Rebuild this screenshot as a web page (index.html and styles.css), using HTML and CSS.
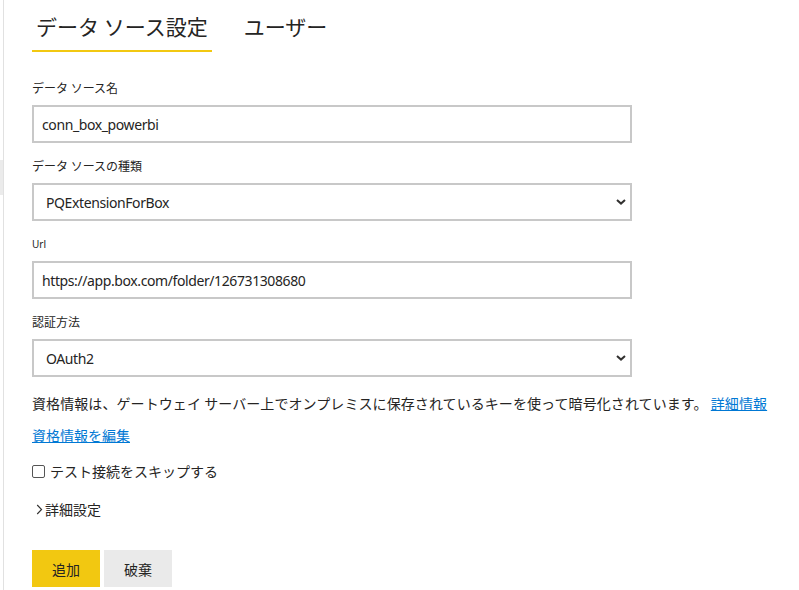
FILE: index.html
```html
<!DOCTYPE html>
<html lang="ja">
<head>
<meta charset="utf-8">
<title>データ ソース設定</title>
<link rel="stylesheet" href="styles.css">
</head>
<body>
<div class="page">
  <div class="rail"><div class="rail-mark"></div></div>
  <div class="main">
    <div class="tabs">
      <div class="tab active">データ ソース設定</div>
      <div class="tab">ユーザー</div>
    </div>

    <div class="field">
      <div class="label">データ ソース名</div>
      <div class="box"><span class="value">conn_box_powerbi</span></div>
    </div>

    <div class="field">
      <div class="label">データ ソースの種類</div>
      <div class="box select"><span class="value">PQExtensionForBox</span>
        <svg class="chev" width="10" height="6" viewBox="0 0 10 6"><path d="M1 1 L5 4.6 L9 1" fill="none" stroke="#323130" stroke-width="2"/></svg>
      </div>
    </div>

    <div class="field">
      <div class="label small">Url</div>
      <div class="box"><span class="value">https://app.box.com/folder/126731308680</span></div>
    </div>

    <div class="field">
      <div class="label">認証方法</div>
      <div class="box select"><span class="value">OAuth2</span>
        <svg class="chev" width="10" height="6" viewBox="0 0 10 6"><path d="M1 1 L5 4.6 L9 1" fill="none" stroke="#323130" stroke-width="2"/></svg>
      </div>
    </div>

    <p class="note">資格情報は、ゲートウェイ サーバー上でオンプレミスに保存されているキーを使って暗号化されています。 <a class="link" href="#">詳細情報</a></p>
    <p class="edit"><a class="link" href="#">資格情報を編集</a></p>

    <label class="check"><span class="checkbox"></span><span>テスト接続をスキップする</span></label>

    <div class="advanced">
      <svg width="7" height="11" viewBox="0 0 7 11"><path d="M1.2 1 L5.6 5.5 L1.2 10" fill="none" stroke="#323130" stroke-width="1.1"/></svg>
      <span>詳細設定</span>
    </div>

    <div class="actions">
      <button class="btn primary">追加</button>
      <button class="btn secondary">破棄</button>
    </div>
  </div>
</div>
</body>
</html>
```

FILE: styles.css
```css
html, body {
  margin: 0;
  padding: 0;
  background: #ffffff;
}
body {
  font-family: "Noto Sans", "Noto Sans CJK JP", sans-serif;
  color: #252423;
  font-size: 14px;
}
.page {
  display: flex;
  min-height: 590px;
}
.rail {
  width: 3px;
  flex: none;
}
.rail-mark {
  margin-top: 160px;
  height: 35px;
  background: #ebebeb;
}
.main {
  flex: 1;
  border-left: 1px solid #e1e1e1;
  padding-left: 28px;
}
.tabs {
  display: flex;
  gap: 28px;
  padding-top: 11px;
}
.tab {
  font-family: "Noto Sans CJK JP", sans-serif;
  font-size: 21px;
  line-height: 30px;
  padding: 0 4px 9px 4px;
  border-bottom: 2px solid transparent;
  color: #252423;
}
.tab.active {
  border-bottom-color: #f2c811;
}
.field {
  width: 600px;
}
.tabs + .field {
  margin-top: 28px;
}
.field + .field {
  margin-top: 15px;
}
.label {
  font-family: "Noto Sans CJK JP", sans-serif;
  font-size: 12px;
  line-height: 16px;
  margin-bottom: 9px;
  color: #252423;
}
.label.small {
  font-family: "Noto Sans", sans-serif;
  font-size: 10px;
}
.box {
  box-sizing: border-box;
  height: 38px;
  border: 2px solid #c8c8c8;
  display: flex;
  align-items: center;
  padding: 0 8px;
  font-size: 14px;
  color: #252423;
}
.value {
  letter-spacing: -0.4px;
}
.box.select {
  padding: 0 4px 0 12px;
  justify-content: space-between;
}
.note {
  margin: 16px 0 0 0;
  font-family: "Noto Sans CJK JP", sans-serif;
  font-size: 14px;
  line-height: 20px;
  letter-spacing: 0.08px;
  white-space: nowrap;
}
.edit {
  margin: 12px 0 0 0;
  font-family: "Noto Sans CJK JP", sans-serif;
  font-size: 14px;
  line-height: 20px;
}
.link {
  color: #0078d4;
  text-decoration: underline;
}
.check {
  display: flex;
  align-items: center;
  gap: 5px;
  margin-top: 16px;
  font-family: "Noto Sans CJK JP", sans-serif;
  font-size: 14px;
  line-height: 20px;
}
.checkbox {
  box-sizing: border-box;
  width: 13px;
  height: 13px;
  border: 1px solid #555;
  border-radius: 2px;
  background: #fff;
}
.advanced {
  display: flex;
  align-items: center;
  gap: 2px;
  margin-top: 18px;
  padding-left: 4px;
  font-family: "Noto Sans CJK JP", sans-serif;
  font-size: 14px;
  line-height: 20px;
}
.actions {
  display: flex;
  gap: 4px;
  margin-top: 31px;
}
.btn {
  width: 68px;
  height: 37px;
  border: none;
  font-family: "Noto Sans CJK JP", sans-serif;
  font-size: 14px;
  color: #252423;
  padding: 0;
}
.btn.primary {
  background: #f2c811;
}
.btn.secondary {
  background: #eaeaea;
}
```
